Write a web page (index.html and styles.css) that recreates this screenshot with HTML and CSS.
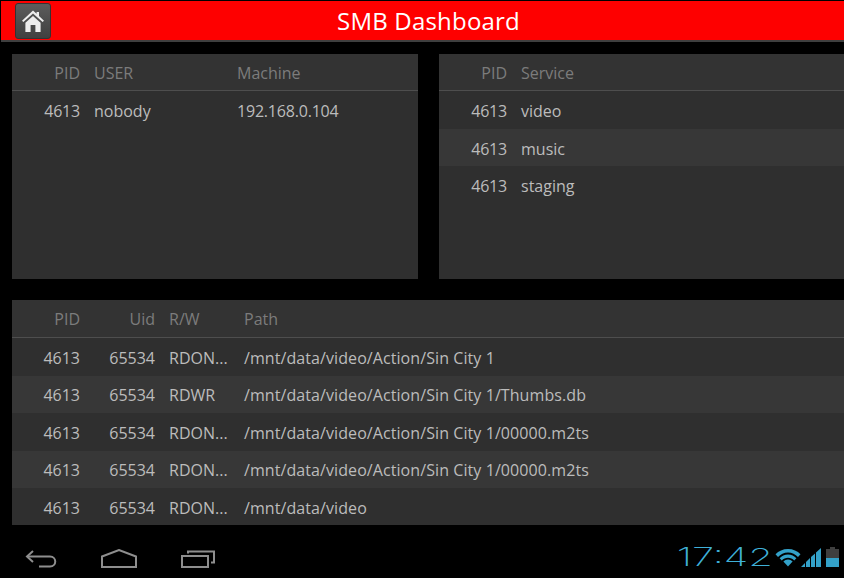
FILE: index.html
```html
<!DOCTYPE html>
<html lang="en">
<head>
<meta charset="utf-8">
<title>SMB Dashboard</title>
<link rel="stylesheet" href="styles.css">
</head>
<body>
<div class="screen">
  <header class="topbar">
    <button class="home-btn" aria-label="Home">
      <svg width="24" height="24" viewBox="0 0 24 24"><path fill="#eee" d="M12 1.500 15.600 4.800V3H18V7L23 11.800 21.600 13 12 4.600 2.400 13 1 11.800Z"/><path fill="#eee" d="M12 7 19.600 13.700V23H14.400V16H9.600V23H4.400V13.700Z"/></svg>
    </button>
    <h1 class="title">SMB Dashboard</h1>
  </header>
  <main class="content">
    <div class="top-panels">
      <section class="panel panel-users">
        <div class="row head"><span class="c pid">PID</span><span class="c user">USER</span><span class="c">Machine</span></div>
        <div class="row"><span class="c pid num">4613</span><span class="c user">nobody</span><span class="c num">192.168.0.104</span></div>
      </section>
      <section class="panel panel-services">
        <div class="row head"><span class="c pid">PID</span><span class="c">Service</span></div>
        <div class="row"><span class="c pid num">4613</span><span class="c">video</span></div>
        <div class="row alt"><span class="c pid num">4613</span><span class="c">music</span></div>
        <div class="row"><span class="c pid num">4613</span><span class="c">staging</span></div>
      </section>
    </div>
    <section class="panel panel-files">
      <div class="row head"><span class="c pid">PID</span><span class="c uid">Uid</span><span class="c rw">R/W</span><span class="c">Path</span></div>
      <div class="row"><span class="c pid">4613</span><span class="c uid">65534</span><span class="c rw">RDON...</span><span class="c path">/mnt/data/video/Action/Sin City 1</span></div>
      <div class="row alt"><span class="c pid">4613</span><span class="c uid">65534</span><span class="c rw">RDWR</span><span class="c path">/mnt/data/video/Action/Sin City 1/Thumbs.db</span></div>
      <div class="row"><span class="c pid">4613</span><span class="c uid">65534</span><span class="c rw">RDON...</span><span class="c path">/mnt/data/video/Action/Sin City 1/00000.m2ts</span></div>
      <div class="row alt"><span class="c pid">4613</span><span class="c uid">65534</span><span class="c rw">RDON...</span><span class="c path">/mnt/data/video/Action/Sin City 1/00000.m2ts</span></div>
      <div class="row"><span class="c pid">4613</span><span class="c uid">65534</span><span class="c rw">RDON...</span><span class="c path">/mnt/data/video</span></div>
    </section>
  </main>
  <footer class="navbar">
    <div class="nav-buttons">
      <svg width="32" height="18" viewBox="0 0 32 18" fill="none" stroke="#8e8e8e" stroke-width="2"><path d="M8 1 2 6.500 8 12"/><path d="M2.500 6.500H25C32 6.500 32 16.500 25 16.500H14"/></svg>
      <svg width="36" height="19" viewBox="0 0 36 19" fill="none" stroke="#8e8e8e" stroke-width="2"><path d="M1 7.500 18 1 35 7.500V18H1Z"/></svg>
      <svg width="34" height="18" viewBox="0 0 34 18" fill="none" stroke="#8e8e8e" stroke-width="2"><path d="M1 6H27V17H1Z"/><path d="M7 3.500V1.500H33V12.500H30"/></svg>
    </div>
    <div class="status">
      <span class="clock">17:42</span>
      <svg class="wifi" width="26" height="18" viewBox="0 0 26 18"><path fill="#33a1c9" d="M13 0C18 0 22.500 2 25.500 5.200L23 8C20.500 5.300 17 3.500 13 3.500S5.500 5.300 3 8L.5 5.200C3.500 2 8 0 13 0Z"/><path fill="#33a1c9" d="M13 5.500C16.300 5.500 19.300 6.900 21.400 9.200L19.200 11.500C17.600 9.800 15.400 8.800 13 8.800S8.400 9.800 6.800 11.500L4.600 9.200C6.700 6.900 9.700 5.500 13 5.500Z"/><path fill="#33a1c9" d="M13 10.500C14.800 10.500 16.400 11.200 17.600 12.500L13 17.500 8.400 12.500C9.600 11.200 11.200 10.500 13 10.500Z"/></svg>
      <svg class="signal" width="20" height="19" viewBox="0 0 20 19" fill="#33a1c9"><path d="M0 19 4 15V19Z"/><path d="M5 19V14L9 10V19Z"/><path d="M10 19V9L14 5.500V19Z"/><path d="M15 19V4.500L20 0V19Z"/></svg>
      <svg class="battery" width="13" height="20" viewBox="0 0 13 20"><path fill="#3f3f3f" d="M4 0H9V2H13V11H0V2H4Z"/><path fill="#33a1c9" d="M0 11H13V20H0Z"/></svg>
    </div>
  </footer>
</div>
</body>
</html>
```
FILE: styles.css
```css
* { box-sizing: border-box; }
html, body { margin: 0; padding: 0; background: #000; }
body { font-family: "Open Sans", "Noto Sans", sans-serif; }
.screen { width: 844px; height: 578px; overflow: hidden; display: flex; flex-direction: column; background: #000; }

.topbar {
  position: relative;
  flex: 0 0 41px;
  margin: 1px 0 0 1px;
  background: #fe0000;
  border-bottom: 2px solid #3f3f3f;
  display: flex;
  align-items: center;
  justify-content: center;
}
.home-btn {
  position: absolute;
  left: 14px;
  top: 2px;
  width: 36px;
  height: 36px;
  padding: 0;
  display: flex;
  align-items: center;
  justify-content: center;
  background: linear-gradient(#5c5c5c, #404040);
  border: 1px solid #333;
  border-radius: 3px;
}
.title { margin: 1px 0 0 12px; font-size: 24px; font-weight: 400; line-height: 32px; letter-spacing: .2px; color: #fff; }

.content { flex: 1; padding: 12px 0 0 12px; display: flex; flex-direction: column; gap: 21px; }
.top-panels { display: flex; gap: 21px; }
.panel { background: #2f2f2f; height: 225px; }
.panel-users { width: 406px; }
.panel-services { flex: 1; }
.panel-files { width: 832px; }

.row { display: flex; height: 37.500px; padding-top: 3px; align-items: center; font-size: 16px; color: #bcbcbc; white-space: nowrap; }
.row.alt { background: #373737; }
.row.head { height: 37px; padding-top: 2px; color: #7c7c7c; border-bottom: 1px solid #4e4e4e; background: #333; }
.panel-files .row { padding-top: 2px; }
.panel-files .row.head { height: 38px; padding-top: 1px; }
.c { display: block; }
.pid { width: 68px; margin-right: 14px; text-align: right; }
.user { width: 143px; }
.uid { width: 61px; margin-right: 14px; text-align: right; }
.rw { width: 75px; }
.num { letter-spacing: -.2px; }
.path { letter-spacing: .08px; }

.navbar { flex: 0 0 53px; display: flex; justify-content: space-between; align-items: flex-start; }
.nav-buttons { display: flex; align-items: flex-end; gap: 44px; padding: 24px 0 0 25px; }
.status { display: flex; align-items: flex-end; padding: 22px 5px 0 0; height: 42px; }
.clock { font-family: "Inter", sans-serif; font-weight: 200; font-size: 25px; line-height: 19px; color: #3fb0d8; margin-right: 2px; width: 95px; transform: scaleX(1.6); transform-origin: right; text-align: right; }
.battery { margin-left: 5px; }
```
